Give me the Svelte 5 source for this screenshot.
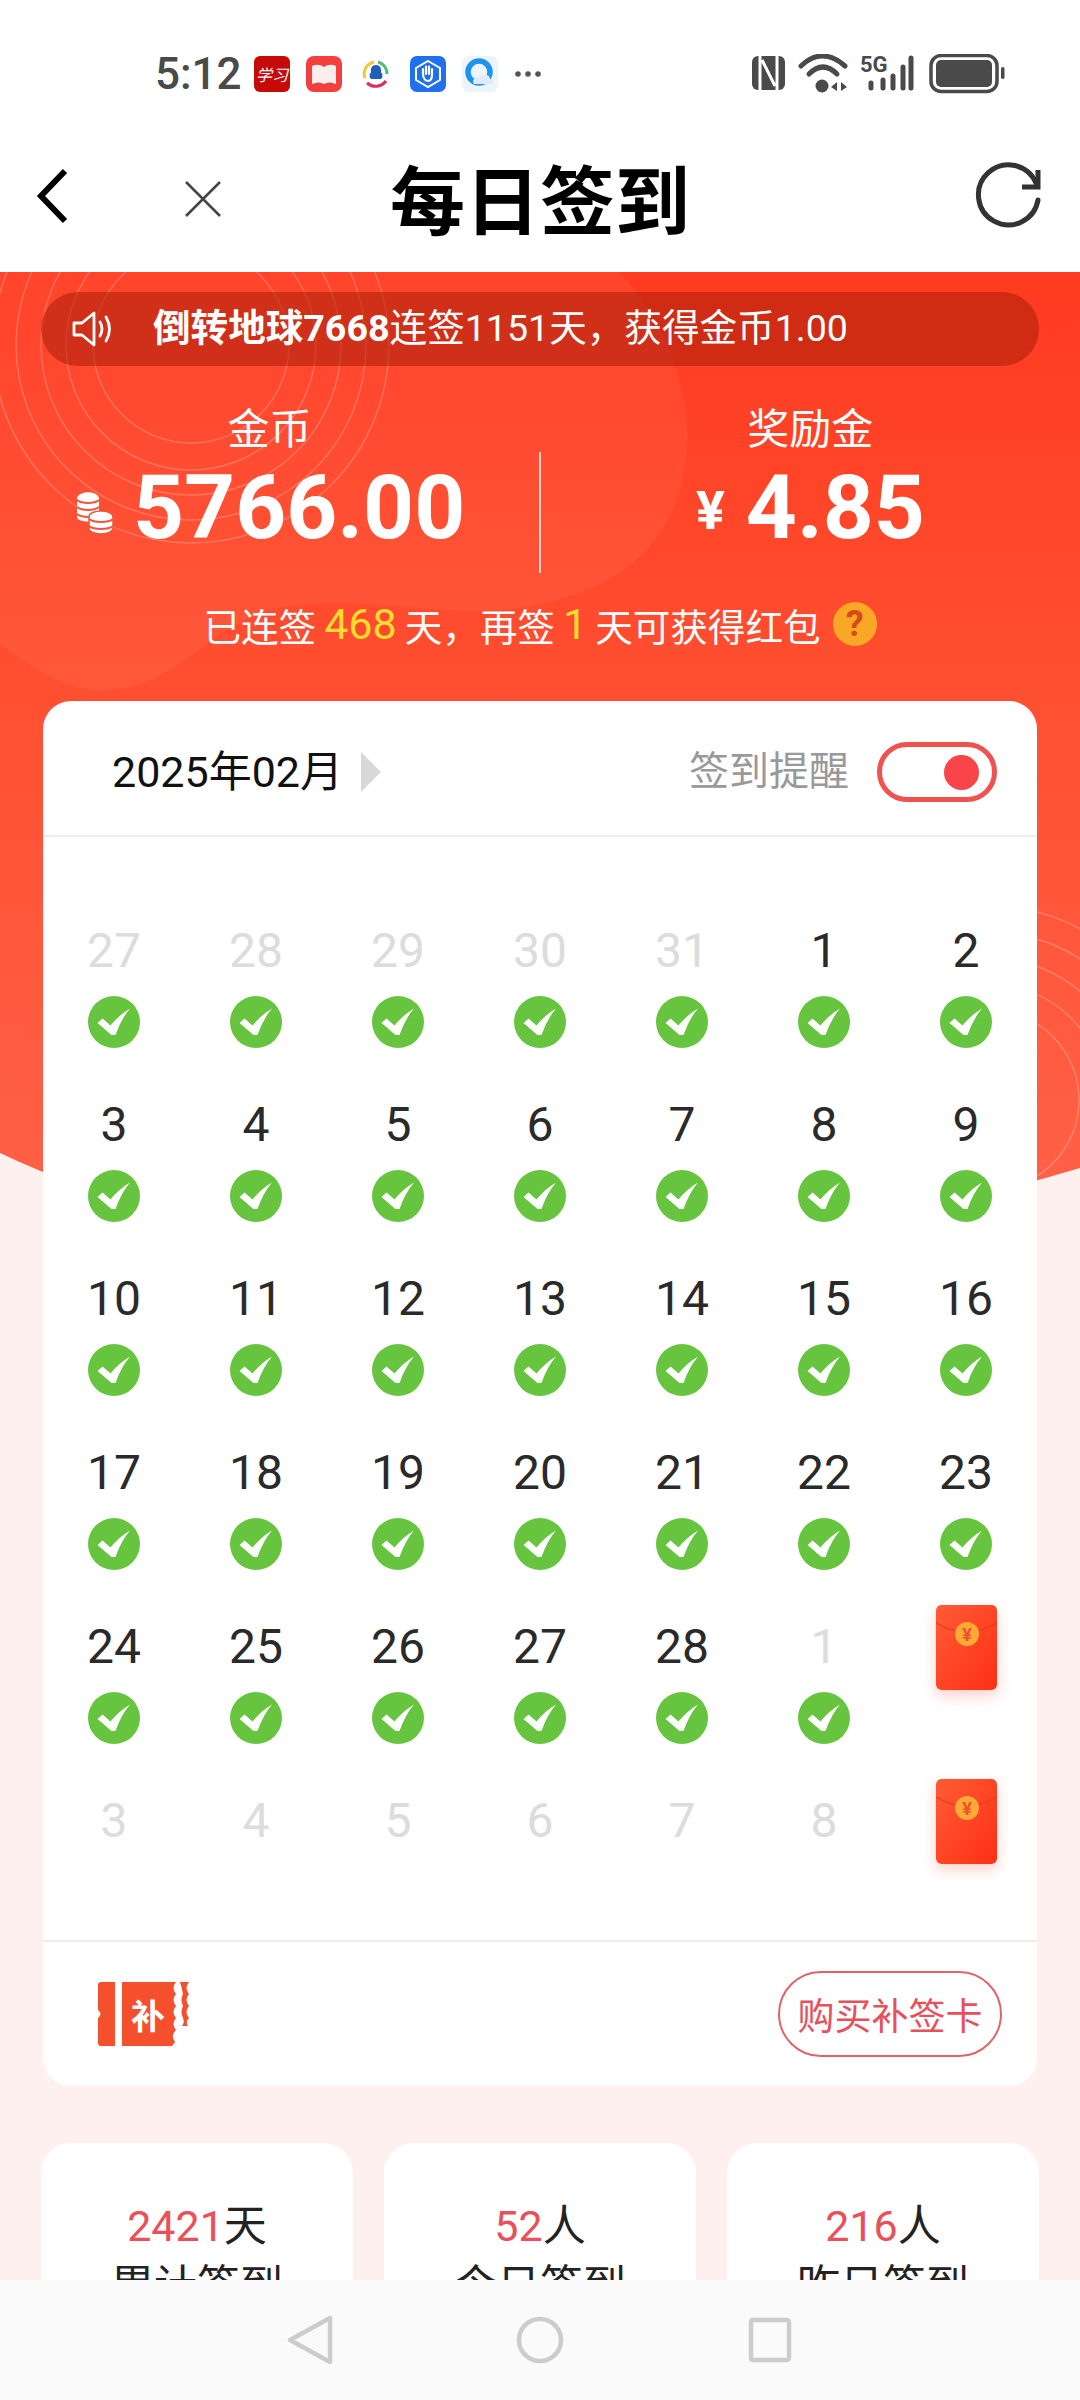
<script>
const rows = [
	[[27, 1, 1], [28, 1, 1], [29, 1, 1], [30, 1, 1], [31, 1, 1], [1, 0, 1], [2, 0, 1]],
	[[3, 0, 1], [4, 0, 1], [5, 0, 1], [6, 0, 1], [7, 0, 1], [8, 0, 1], [9, 0, 1]],
	[[10, 0, 1], [11, 0, 1], [12, 0, 1], [13, 0, 1], [14, 0, 1], [15, 0, 1], [16, 0, 1]],
	[[17, 0, 1], [18, 0, 1], [19, 0, 1], [20, 0, 1], [21, 0, 1], [22, 0, 1], [23, 0, 1]],
	[[24, 0, 1], [25, 0, 1], [26, 0, 1], [27, 0, 1], [28, 0, 1], [1, 1, 1], null],
	[[3, 1, 0], [4, 1, 0], [5, 1, 0], [6, 1, 0], [7, 1, 0], [8, 1, 0], null]
];
const days = rows.flat();

const stats = [
	{ num: "2421", unit: "天", label: "累计签到" },
	{ num: "52", unit: "人", label: "今日签到" },
	{ num: "216", unit: "人", label: "昨日签到" }
];

const leftRings = [98, 125, 150, 175, 198];
const rightRings = [90, 116, 142, 168, 194];
</script>

<style>
:global(body) {
	margin: 0;
	padding: 0;
}

.page {
	position: relative;
	width: 1080px;
	height: 2400px;
	overflow: hidden;
	background-color: #fff0f0;
	font-family: Roboto, "Noto Sans CJK SC", sans-serif;
}

.statusbar {
	height: 140px;
	background-color: #fff;
	position: relative;
	display: flex;
	justify-content: space-between;
	align-items: flex-start;
	padding: 54px 75px 0 155px;
	box-sizing: border-box;
}

.status-left {
	display: flex;
	align-items: center;
	height: 40px;
}

.time {
	font-size: 44px;
	font-weight: 500;
	color: #4a4a4a;
	width: 99px;
	line-height: 40px;
}

.status-app {
	display: block;
	margin-right: 16px;
}

.status-right {
	display: block;
}

.navbar {
	height: 132px;
	background-color: #fff;
	position: relative;
	display: flex;
	align-items: center;
	justify-content: center;
}

.title {
	font-size: 75px;
	font-weight: 700;
	color: #000;
	margin: 0 0 6px;
	line-height: 1;
}

.nav-back {
	position: absolute;
	left: 32px;
	top: 26px;
}

.nav-close {
	position: absolute;
	left: 180px;
	top: 37px;
}

.nav-refresh {
	position: absolute;
	left: 972px;
	top: 22px;
}

.hero-bg {
	position: absolute;
	left: 0;
	top: 272px;
}

.content {
	position: relative;
}

.banner {
	margin: 20px 41px 0;
	height: 74px;
	border-radius: 37px;
	background-color: rgba(170, 30, 10, 0.55);
	display: flex;
	align-items: center;
	padding-left: 30px;
	color: #fff;
	font-size: 37.6px;
}

.banner svg {
	margin-right: 36px;
}

.banner span {
	padding-bottom: 10px;
}

.banner b {
	font-weight: 700;
}

.totals {
	display: flex;
	margin-top: 40px;
	height: 169px;
	color: #fff;
}

.total {
	width: 540px;
	text-align: center;
}

.total-label {
	font-size: 42px;
	line-height: 48px;
}

.total-value {
	display: flex;
	align-items: center;
	justify-content: center;
	margin-top: 9px;
	height: 90px;
	font-size: 89px;
	font-weight: 700;
	line-height: 90px;
}

.coins {
	margin-right: 18px;
	margin-top: 10px;
}

.yen {
	font-size: 54px;
	margin-right: 21px;
	margin-top: 6px;
}

.divider {
	width: 1.5px;
	height: 121px;
	margin-top: 46px;
	background-color: rgba(255, 255, 255, 0.75);
}

.streak {
	margin-top: 24px;
	height: 50px;
	display: flex;
	align-items: center;
	justify-content: center;
	color: #fff;
	font-size: 37.6px;
}

.streak em {
	font-style: normal;
	color: #ffdd30;
	font-size: 43px;
	margin: 0 8px;
}

.help {
	width: 44px;
	height: 44px;
	border-radius: 50%;
	background-color: #f9a825;
	color: #d8491c;
	font-size: 36px;
	font-weight: 700;
	line-height: 44px;
	text-align: center;
	margin-left: 12px;
}

.card {
	margin: 52px 43px 0;
	background-color: #fff;
	border-radius: 28px;
}

.card-head {
	height: 136px;
	box-sizing: border-box;
	border-bottom: 2px solid #eeeeee;
	display: flex;
	align-items: center;
	justify-content: space-between;
	padding: 8px 40px 0 69px;
}

.month {
	display: flex;
	align-items: center;
	font-size: 43px;
	color: #111;
}

.month span,
.remind span {
	padding-bottom: 8px;
}

.arrow {
	margin-left: 18px;
	width: 0;
	height: 0;
	border-left: 20px solid #d8d8d8;
	border-top: 20px solid transparent;
	border-bottom: 20px solid transparent;
}

.remind {
	display: flex;
	align-items: center;
	color: #999;
	font-size: 40px;
}

.toggle {
	width: 120px;
	height: 60px;
	margin-left: 28px;
	box-sizing: border-box;
	border: 5px solid #ef5350;
	border-radius: 30px;
	display: flex;
	align-items: center;
	justify-content: flex-end;
	padding-right: 13px;
}

.toggle i {
	width: 35px;
	height: 35px;
	border-radius: 50%;
	background-color: #f9444a;
}

.calendar {
	display: grid;
	grid-template-columns: repeat(7, 142px);
	grid-template-rows: repeat(5, 174px) 149px;
	padding-top: 84px;
}

.day {
	display: flex;
	flex-direction: column;
	align-items: center;
}

.num {
	font-size: 48px;
	font-weight: 400;
	line-height: 60px;
	height: 60px;
	color: #2a2a2a;
}

.num.muted {
	color: #dcdcdc;
}

.check {
	margin-top: 15px;
	display: block;
}

.packet {
	margin-top: -12px;
	width: 61px;
	height: 85px;
	border-radius: 5px;
	box-shadow: 0 6px 14px rgba(255, 70, 40, 0.25);
	display: block;
}

.card-foot {
	height: 146px;
	box-sizing: border-box;
	border-top: 2px solid #eeeeee;
	display: flex;
	align-items: center;
	justify-content: space-between;
	padding: 0 35px 0 55px;
}

.buy {
	width: 224px;
	height: 86px;
	box-sizing: border-box;
	border: 2px solid #e0636a;
	border-radius: 43px;
	display: flex;
	align-items: center;
	justify-content: center;
	color: #e8505a;
	font-size: 37px;
}

.summary {
	display: grid;
	grid-template-columns: repeat(3, 312px);
	gap: 31px;
	margin: 57px 41px 0;
}

.summary-item {
	background-color: #fff;
	border-radius: 30px;
	padding-top: 53px;
	height: 300px;
	box-sizing: border-box;
	text-align: center;
	color: #222;
	font-size: 43px;
	line-height: 60px;
}

.summary-item span {
	color: #e8505a;
}

.softkeys {
	position: absolute;
	left: 0;
	right: 0;
	bottom: 0;
	height: 120px;
	background-color: #fafafa;
	display: flex;
	align-items: center;
	justify-content: center;
	gap: 182px;
}
</style>

<div class="page">
	<svg class="hero-bg" width="1080" height="930" viewBox="0 272 1080 930">
		<defs>
			<linearGradient id="heroFill" x1="0" y1="0" x2="0" y2="1">
				<stop offset="0" stop-color="#ff3a1f" />
				<stop offset="0.45" stop-color="#ff4f31" />
				<stop offset="1" stop-color="#ff6147" />
			</linearGradient>
			<clipPath id="heroClip">
				<path d="M0 272H1080V1168Q1040 1180 1000 1190Q540 1300 80 1186Q40 1172 0 1153Z" />
			</clipPath>
		</defs>
		<g clip-path="url(#heroClip)">
			<rect x="0" y="272" width="1080" height="930" fill="url(#heroFill)" />
			<path d="M0 272H620C680 340 700 420 680 490C660 560 600 600 500 610C420 615 340 592 270 610C200 630 180 690 100 690C60 690 30 665 0 645Z" fill="#fff" fill-opacity="0.05" />
			{#each leftRings as r}
				<circle cx="191" cy="345" {r} fill="none" stroke="#fff" stroke-opacity="0.22" stroke-width="1.5" />
			{/each}
			{#each rightRings as r}
				<circle cx="989" cy="1100" {r} fill="none" stroke="#fff" stroke-opacity="0.22" stroke-width="1.5" />
			{/each}
		</g>
	</svg>

	<div class="statusbar">
		<div class="status-left">
			<span class="time">5:12</span>
			<svg class="status-app" width="36" height="36" viewBox="0 0 36 36">
				<rect width="36" height="36" rx="6" fill="#c60a0a" />
				<text x="18" y="25" font-size="16" font-style="italic" text-anchor="middle" fill="#fff" font-family="'Noto Sans CJK SC', sans-serif">学习</text>
			</svg>
			<svg class="status-app" width="36" height="36" viewBox="0 0 36 36">
				<rect width="36" height="36" rx="8" fill="#f2403f" />
				<path d="M6 10Q13 7 18 11Q23 7 30 10V28Q23 25 18 28Q13 25 6 28Z" fill="#fdeeee" />
			</svg>
			<svg class="status-app" width="36" height="36" viewBox="0 0 36 36">
				<path d="M7 22A12 12 0 0 1 16 6" fill="none" stroke="#efc93a" stroke-width="3" />
				<path d="M20 6A12 12 0 0 1 29 18" fill="none" stroke="#55bd7a" stroke-width="3" />
				<path d="M28 25A13 13 0 0 1 9 27" fill="none" stroke="#d9305c" stroke-width="3" />
				<path d="M18 9C22 9 23.500 12 23 16C25 19 25 21 23 23H13C11 21 11 19 13 16C12.500 12 14 9 18 9Z" fill="#1f5fb8" />
			</svg>
			<svg class="status-app" width="36" height="36" viewBox="0 0 36 36">
				<rect width="36" height="36" rx="7" fill="#1f6fef" />
				<path d="M18 5L30 12V24L18 31L6 24V12Z" fill="none" stroke="#fff" stroke-width="2" />
				<path d="M13 18V13M16 18V10.500M19 18V10.500M22 18V13M13 18C13 23 16 25 18 25C21 25 22 22 22 18" fill="none" stroke="#fff" stroke-width="2.200" stroke-linecap="round" />
			</svg>
			<svg class="status-app" width="36" height="36" viewBox="0 0 36 36">
				<rect width="36" height="36" rx="7" fill="#eef4fb" />
				<circle cx="17" cy="16" r="11" fill="none" stroke="#1e94ee" stroke-width="5.500" />
				<path d="M12 28C9 24 14 20 18 22C20 17 28 18 28 23C32 23 32 28 29 28Z" fill="#dfeaf6" />
			</svg>
			<svg width="28" height="8" viewBox="0 0 28 8">
				<circle cx="4" cy="4" r="2.800" fill="#555" />
				<circle cx="14" cy="4" r="2.800" fill="#555" />
				<circle cx="24" cy="4" r="2.800" fill="#555" />
			</svg>
		</div>
		<svg class="status-right" width="253" height="40" viewBox="752 54 253 40">
			<rect x="752" y="56" width="33" height="34" rx="6" fill="#4a4a4a" />
			<path d="M760 56V90M777 56V90M762 60L775 86" stroke="#fff" stroke-width="3" fill="none" />
			<path d="M801 66Q822 46 845 66" fill="none" stroke="#4a4a4a" stroke-width="5" stroke-linecap="round" />
			<path d="M809 74Q823 60 837 74" fill="none" stroke="#4a4a4a" stroke-width="5" stroke-linecap="round" />
			<circle cx="822" cy="86" r="6.500" fill="#4a4a4a" />
			<path d="M837 82L831 87L837 91ZM841 82L847 87L841 91Z" fill="#4a4a4a" />
			<text x="860" y="72" font-size="22" font-weight="700" fill="#4a4a4a" font-family="Roboto, sans-serif">5G</text>
			<g stroke="#4a4a4a" stroke-width="5" stroke-linecap="round">
				<path d="M871 83V88M883 80V88M893 76V88M903 67V88M911 58V88" />
			</g>
			<rect x="931" y="55.500" width="66" height="36" rx="10" fill="none" stroke="#4a4a4a" stroke-width="3.500" />
			<rect x="936" y="60" width="56" height="27" rx="5" fill="#4a4a4a" />
			<rect x="1001" y="67" width="3.500" height="12" rx="1.700" fill="#4a4a4a" />
		</svg>
	</div>

	<div class="navbar">
		<svg class="nav-back" width="40" height="60" viewBox="0 0 40 60">
			<path d="M33 5L9 30L33 55" fill="none" stroke="#000" stroke-width="6" />
		</svg>
		<svg class="nav-close" width="44" height="44" viewBox="0 0 44 44">
			<path d="M6 5L40 39M40 5L6 39" fill="none" stroke="#444" stroke-width="2.500" />
		</svg>
		<h1 class="title">每日签到</h1>
		<svg class="nav-refresh" width="72" height="72" viewBox="0 0 72 72">
			<path d="M64 21A30 30 0 1 0 66 38" fill="none" stroke="#333" stroke-width="5" stroke-linecap="round" />
			<path d="M66 8V25H50" fill="none" stroke="#333" stroke-width="5" />
		</svg>
	</div>

	<div class="content">
		<div class="banner">
			<svg width="46" height="38" viewBox="0 0 44 38">
				<path d="M2 13H10L22 3V35L10 25H2Z" fill="none" stroke="#fff" stroke-width="2.800" stroke-linejoin="round" />
				<path d="M28 12Q32 19 28 26M34 7Q41 19 34 31" fill="none" stroke="#fff" stroke-width="2.800" stroke-linecap="round" />
			</svg>
			<span><b>倒转地球7668</b>连签1151天，获得金币1.00</span>
		</div>

		<div class="totals">
			<div class="total">
				<div class="total-label">金币</div>
				<div class="total-value">
					<svg class="coins" width="41" height="44" viewBox="0 0 41 44">
						<path d="M3 8C3 -1 25 -1 25 8V26C25 32 3 32 3 26Z" fill="#fff" />
						<path d="M3 9C8 13 20 13 25 9M3 16C8 20 20 20 25 16M3 23C8 27 20 27 25 23" fill="none" stroke="#f0563a" stroke-width="2" />
						<path d="M15 26C15 18 39 18 39 26V37C39 45 15 45 15 37Z" fill="#fff" stroke="#f0563a" stroke-width="1.500" />
						<path d="M15 28C20 32 34 32 39 28M15 35C20 39 34 39 39 35" fill="none" stroke="#f0563a" stroke-width="2" />
					</svg>
					<span>5766.00</span>
				</div>
			</div>
			<div class="divider"></div>
			<div class="total">
				<div class="total-label">奖励金</div>
				<div class="total-value">
					<span class="yen">¥</span>
					<span>4.85</span>
				</div>
			</div>
		</div>

		<div class="streak">
			已连签<em>468</em>天，再签<em>1</em>天可获得红包<div class="help">?</div>
		</div>

		<div class="card">
			<div class="card-head">
				<div class="month"><span>2025年02月</span><div class="arrow"></div></div>
				<div class="remind"><span>签到提醒</span><div class="toggle"><i></i></div></div>
			</div>

			<div class="calendar">
				{#each days as day}
					<div class="day">
						{#if day}
							<div class="num" class:muted={day[1]}>{day[0]}</div>
							{#if day[2]}
								<svg class="check" width="52" height="52" viewBox="0 0 52 52">
									<circle cx="26" cy="26" r="26" fill="#67c43f" />
									<path d="M9.500 27L14.500 22.500L22.500 29.500Q31 19 42 12.500Q33 23 27.500 39H23.500Z" fill="#fff" />
								</svg>
							{/if}
						{:else}
							<svg class="packet" viewBox="0 0 61 85">
								<defs>
									<linearGradient id="packetFill" x1="0" y1="0" x2="1" y2="1">
										<stop offset="0" stop-color="#ff5c36" />
										<stop offset="1" stop-color="#ff2f14" />
									</linearGradient>
								</defs>
								<rect width="61" height="85" rx="5" fill="url(#packetFill)" />
								<path d="M0 18Q30 36 61 18" fill="none" stroke="#e03a1c" stroke-width="1.500" stroke-opacity="0.7" />
								<circle cx="31" cy="29" r="12" fill="#fbaa38" />
								<text x="31" y="35.500" font-size="18" font-weight="700" text-anchor="middle" fill="#ee5030" font-family="Roboto, sans-serif">¥</text>
							</svg>
						{/if}
					</div>
				{/each}
			</div>

			<div class="card-foot">
				<svg width="91" height="64" viewBox="0 0 91 64">
					<path d="M3 0H17V64H3Q0 64 0 61V36Q5 32 0 28V3Q0 0 3 0Z" fill="#f4502e" />
					<path d="M24 0H78Q73 6 78 12Q73 18 78 24Q73 30 78 36Q73 42 78 48Q72 54 77 60L74 64H24Z" fill="#f4502e" />
					<path d="M82 0H91Q86 6 91 12Q86 18 91 24Q86 30 91 36Q87 40 90 44H84Q87 40 85 36Q82 30 85 24Q82 18 85 12Q84 6 82 0Z" fill="#f4502e" />
					<text x="50" y="47" font-size="34" font-weight="700" text-anchor="middle" fill="#fff" font-family="'Noto Sans CJK SC', sans-serif">补</text>
				</svg>
				<div class="buy">购买补签卡</div>
			</div>
		</div>

		<div class="summary">
			{#each stats as stat}
				<div class="summary-item">
					<div><span>{stat.num}</span>{stat.unit}</div>
					<div>{stat.label}</div>
				</div>
			{/each}
		</div>
	</div>

	<div class="softkeys">
		<svg width="48" height="50" viewBox="0 0 48 50">
			<path d="M44 3V47L4 25Z" fill="none" stroke="#cccccc" stroke-width="4.500" stroke-linejoin="round" />
		</svg>
		<svg width="48" height="50" viewBox="0 0 48 50">
			<circle cx="24" cy="25" r="21" fill="none" stroke="#cccccc" stroke-width="4.500" />
		</svg>
		<svg width="48" height="50" viewBox="0 0 48 50">
			<rect x="5" y="5" width="38" height="40" rx="2" fill="none" stroke="#cccccc" stroke-width="4.500" />
		</svg>
	</div>
</div>
